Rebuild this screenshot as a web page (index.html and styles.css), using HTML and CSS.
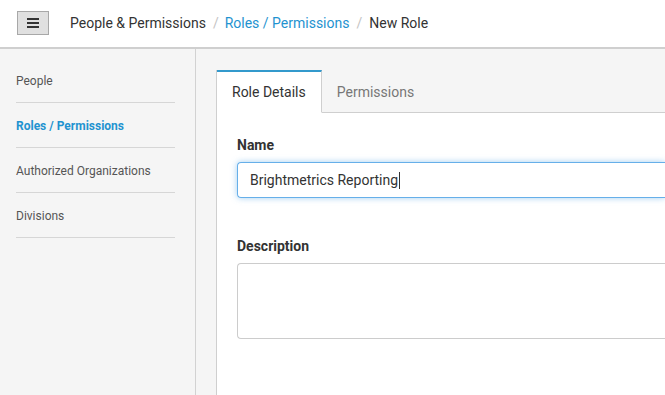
FILE: index.html
```html
<!DOCTYPE html>
<html lang="en">
<head>
<meta charset="utf-8">
<title>New Role</title>
<link rel="stylesheet" href="styles.css">
</head>
<body>
<header class="topbar">
  <button class="menu-btn" aria-label="Menu">
    <span class="bar"></span><span class="bar"></span><span class="bar"></span>
  </button>
  <nav class="crumbs">
    <span class="crumb">People &amp; Permissions</span>
    <span class="sep">/</span>
    <a class="crumb link">Roles / Permissions</a>
    <span class="sep">/</span>
    <span class="crumb">New Role</span>
  </nav>
</header>
<div class="layout">
  <aside class="sidebar">
    <ul class="side-list">
      <li class="side-item">People</li>
      <li class="side-item active">Roles / Permissions</li>
      <li class="side-item">Authorized Organizations</li>
      <li class="side-item">Divisions</li>
    </ul>
  </aside>
  <main class="main">
    <section class="panel">
      <div class="tabs">
        <div class="tab active">Role Details</div>
        <div class="tab">Permissions</div>
        <div class="tab-fill"></div>
      </div>
      <div class="content">
        <div class="field">
          <label class="label">Name</label>
          <div class="input focused">Brightmetrics Reporting<span class="caret"></span></div>
        </div>
        <div class="field">
          <label class="label">Description</label>
          <div class="textarea"></div>
        </div>
      </div>
    </section>
  </main>
</div>
</body>
</html>
```

FILE: styles.css
```css
* { box-sizing: border-box; }
html, body { margin: 0; padding: 0; height: 100%; }
body {
  font-family: Roboto, "Liberation Sans", sans-serif;
  color: #333;
  background: #f5f5f5;
  overflow: hidden;
  display: flex;
  flex-direction: column;
}
.topbar {
  height: 49px;
  background: #fff;
  border-bottom: 2px solid #cfcfcf;
  display: flex;
  align-items: center;
  padding-left: 17px;
  flex: none;
}
.menu-btn {
  width: 32px;
  height: 24px;
  margin-top: -1px;
  background: #e0e0e0;
  border: 1px solid #a8a8a8;
  padding: 0;
  display: flex;
  flex-direction: column;
  align-items: center;
  justify-content: center;
  gap: 2px;
}
.bar { display: block; width: 12px; height: 2px; background: #333; }
.crumbs {
  margin-left: 21px;
  font-size: 14px;
  display: flex;
  align-items: center;
  gap: 7px;
  margin-top: -2px;
}
.crumb { color: #333; }
.crumb.link { color: #1f93d0; text-decoration: none; margin-left: -1px; }
.sep { color: #c4c4c4; }
.layout { flex: 1; display: flex; }
.sidebar {
  width: 196px;
  background: #f5f5f5;
  border-right: 1px solid #d2d2d2;
  padding: 9px 20px 0 16px;
  flex: none;
}
.side-list { list-style: none; margin: 0; padding: 0; }
.side-item {
  font-size: 12px;
  line-height: 14px;
  color: #555;
  padding: 16px 0 14px;
  border-bottom: 1px solid #d6d6d6;
}
.side-item.active { color: #1f93d0; font-weight: 700; }
.main { flex: 1; padding: 21px 0 0 20px; background: #f5f5f5; }
.panel {
  height: 100%;
  border-left: 1px solid #cfcfcf;
  display: flex;
  flex-direction: column;
}
.tabs { display: flex; height: 43px; flex: none; }
.tab {
  font-size: 14px;
  padding: 2px 15px 0;
  display: flex;
  align-items: center;
  color: #777;
  border-bottom: 1px solid #cfcfcf;
}
.tab.active {
  color: #333;
  background: #fff;
  border-top: 2px solid #3399cc;
  border-right: 1px solid #cfcfcf;
  border-bottom: 1px solid #fff;
  padding-bottom: 0;
  padding-top: 0;
}
.tab-fill { flex: 1; border-bottom: 1px solid #cfcfcf; }
.content { flex: 1; background: #fff; padding: 22px 0 0 20px; }
.field { margin-bottom: 38px; }
.label {
  display: block;
  font-size: 14px;
  font-weight: 700;
  line-height: 20px;
  color: #333;
  margin-bottom: 7px;
}
.input {
  height: 36px;
  border: 1px solid #66afe9;
  border-right: none;
  border-radius: 4px 0 0 4px;
  box-shadow: 0 0 6px rgba(102, 175, 233, 0.6);
  font-size: 14px;
  line-height: 34px;
  padding-left: 12px;
  color: #333;
  display: flex;
  align-items: center;
}
.caret { display: inline-block; width: 1px; height: 17px; background: #333; margin-left: 1px; }
.textarea {
  height: 76px;
  border: 1px solid #ccc;
  border-right: none;
  border-radius: 4px 0 0 4px;
}
```
